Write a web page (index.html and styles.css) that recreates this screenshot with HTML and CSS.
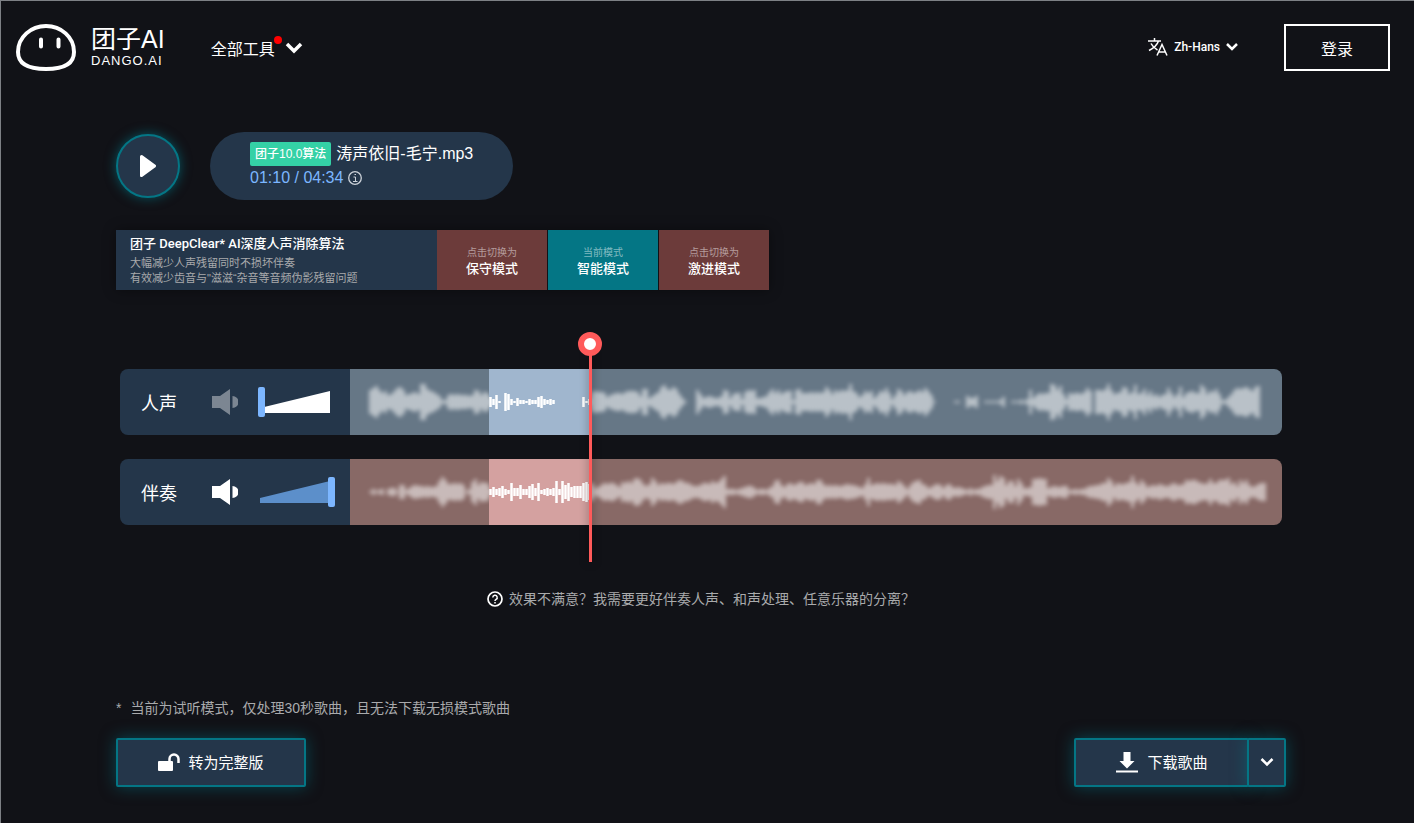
FILE: index.html
```html
<!DOCTYPE html>
<html lang="zh-Hans">
<head>
  <meta charset="UTF-8">
  <meta name="viewport" content="width=device-width, initial-scale=1.0">
  <title>团子AI</title>
  <link rel="stylesheet" href="styles.css">
</head>
<body>
  <header class="header">
    <a class="logo" href="#">
      <svg class="logo-face" viewBox="0 0 60 48" width="60" height="48">
        <path d="M30 2C15 2 2 13 2 28C2 40 13 45 30 45S58 40 58 28C58 13 45 2 30 2Z" fill="none" stroke="#fff" stroke-width="4"/>
        <path d="M25 15.500v7M42.500 15.500v7" stroke="#fff" stroke-width="4" stroke-linecap="round"/>
      </svg>
      <span class="logo-text">
        <span class="logo-name">团子AI</span>
        <span class="logo-sub">DANGO.AI</span>
      </span>
    </a>
    <button class="tools">
      <span class="tools-label">全部工具<i class="dot"></i></span>
      <svg viewBox="0 0 18 12" width="18" height="12"><path d="M2 2l7 7 7-7" fill="none" stroke="#fff" stroke-width="3.500"/></svg>
    </button>
    <button class="lang">
      <svg viewBox="0 0 20 18" width="20" height="18" fill="none" stroke="#fff" stroke-width="1.500">
        <path d="M0 3h13M6.500 0v3M10.500 3C9 7.500 5 10.500 1 12.500M3 5.500c1.500 3 4 5 6.500 6.500"/>
        <path d="M9 17.500L14 6.500l5 11M10.500 14h7"/>
      </svg>
      <span>Zh-Hans</span>
      <svg viewBox="0 0 12 8" width="12" height="8"><path d="M1 1l5 5 5-5" fill="none" stroke="#fff" stroke-width="2.500"/></svg>
    </button>
    <button class="login">登录</button>
  </header>

  <main class="main">
    <section class="player">
      <button class="play" aria-label="播放">
        <svg viewBox="0 0 16 22" width="16" height="22"><path d="M1.500 1.500L14.500 11 1.500 20.500Z" fill="#fff" stroke="#fff" stroke-width="3" stroke-linejoin="round"/></svg>
      </button>
      <div class="song">
        <div class="song-title"><span class="badge">团子10.0算法</span><span>涛声依旧-毛宁.mp3</span></div>
        <div class="song-time">
          <span>01:10 / 04:34</span>
          <svg viewBox="0 0 14 14" width="14" height="14" fill="none" stroke="#ccd2d9"><circle cx="7" cy="7" r="6.300" stroke-width="1.300"/><path d="M5.500 6h2v4.500M5 10.500h4.500M6.500 3.500h1.500" stroke-width="1"/></svg>
        </div>
      </div>
    </section>

    <section class="modes">
      <div class="modes-info">
        <h2>团子 DeepClear* AI深度人声消除算法</h2>
        <p>大幅减少人声残留同时不损坏伴奏</p>
        <p>有效减少齿音与"滋滋“杂音等音频伪影残留问题</p>
      </div>
      <button class="mode"><small>点击切换为</small><span>保守模式</span></button>
      <button class="mode active"><small>当前模式</small><span>智能模式</span></button>
      <button class="mode"><small>点击切换为</small><span>激进模式</span></button>
    </section>

    <section class="tracks">
      <div class="track vocal">
        <div class="track-panel">
          <label class="track-name" for="vol-vocal">人声</label>
          <button class="mute muted" aria-label="静音">
            <svg viewBox="0 0 26 26" width="26" height="26" fill="#fff"><path d="M0 7h8L18 0v26L8 19H0zM20.500 7a6 6 0 0 1 0 12z"/></svg>
          </button>
          <div class="volume">
            <svg viewBox="0 0 77 30" width="77" height="30"><path d="M2 21L72 4v22H2z"/></svg>
            <input id="vol-vocal" type="range" min="0" max="100" value="0">
          </div>
        </div>
        <svg class="wave" id="wave-vocal" viewBox="0 0 932 66" preserveAspectRatio="none"></svg>
      </div>
      <div class="track backing">
        <div class="track-panel">
          <label class="track-name" for="vol-backing">伴奏</label>
          <button class="mute" aria-label="静音">
            <svg viewBox="0 0 26 26" width="26" height="26" fill="#fff"><path d="M0 7h8L18 0v26L8 19H0zM20.500 7a6 6 0 0 1 0 12z"/></svg>
          </button>
          <div class="volume">
            <svg viewBox="0 0 77 30" width="77" height="30"><path d="M2 21L72 4v22H2z"/></svg>
            <input id="vol-backing" type="range" min="0" max="100" value="100">
          </div>
        </div>
        <svg class="wave" id="wave-backing" viewBox="0 0 932 66" preserveAspectRatio="none"></svg>
      </div>
      <div class="playhead"></div>
    </section>

    <a class="help" href="#">
      <svg viewBox="0 0 16 16" width="16" height="16" fill="none" stroke="#fff"><circle cx="8" cy="8" r="7" stroke-width="1.700"/><path d="M5.800 6.500a2.200 2.200 0 1 1 3.300 1.900C8.300 8.900 8 9.200 8 10M8 11v1.500" stroke-width="1.500"/></svg>
      <span>效果不满意？我需要更好伴奏人声、和声处理、任意乐器的分离？</span>
    </a>

    <p class="note"><span>*</span><span>当前为试听模式，仅处理30秒歌曲，且无法下载无损模式歌曲</span></p>

    <div class="actions">
      <button class="btn unlock">
        <svg viewBox="0 0 22 18" width="22" height="18"><rect x="0" y="8" width="15" height="10" rx="1" fill="#fff"/><path d="M11.500 9V6a4.500 4.500 0 0 1 9 0v4" fill="none" stroke="#fff" stroke-width="2.500"/></svg>
        <span>转为完整版</span>
      </button>
      <div class="download">
        <button class="btn download-main">
          <svg viewBox="0 0 24 22" width="24" height="22" fill="#fff"><path d="M8.500 1h7v9h4L12 17.500 4.500 10h4z"/><path d="M1 19.500h22v2H1z"/></svg>
          <span>下载歌曲</span>
        </button>
        <button class="btn download-more" aria-label="更多">
          <svg viewBox="0 0 14 10" width="14" height="10"><path d="M1.500 2L7 7.500 12.500 2" fill="none" stroke="#fff" stroke-width="2.500"/></svg>
        </button>
      </div>
    </div>
  </main>

  <script>
    // half height of every 3px bar
    const vocal = [
      12,14,16,12,9,11,7,8,11,14,15,12,7,8,9,10,8,18,18,13,11,10,8,6,2,2,7,8,7,8,7,7,7,6,7,12,11,7,10,9,
      5,3,7,1,0,9,8,3,1,4,2,2,1,3,2,2,5,6,3,2,3,2,0,0,0,0,0,0,0,0,0,5,1,3,
      10,11,10,10,9,5,7,8,9,9,8,10,11,11,11,10,6,13,13,4,6,8,10,15,17,13,12,15,13,8,4,1,0,0,0,12,8,4,5,6,5,4,4,6,12,11,4,8,9,9,3,10,12,11,12,4,4,5,6,10,13,9,12,8,10,11,11,2,12,13,9,9,9,10,9,10,9,10,15,12,8,12,10,
      12,11,12,18,11,9,5,7,11,9,11,4,7,11,10,14,9,3,7,13,11,7,10,11,9,10,12,10,14,11,7,1,0,0,0,0,0,0,1,1,0,0,6,4,4,6,0,0,1,1,1,1,1,2,5,0,0,1,1,1,2,1,3,12,4,7,9,8,9,9,18,17,12,16,8,3,9,8,9,9,8,10,14,11,0,12,12,11,13,18,12,8,9,10,15,14,8,10,17,8,9,13,7,11,6,8,5,7,8,14,9,5,8,15,5,9,10,11,9,9,17,14,8,11,10,13,8,2,2,5,8,12,14,13,14,15,13,11,15,16
    ];
    const backing = [
      1,3,1,2,3,0,3,4,4,1,7,7,2,4,6,7,6,6,5,6,5,5,6,11,15,12,8,8,9,8,9,7,1,3,10,13,7,10,9,9,
      3,5,3,4,6,3,2,9,4,4,7,3,3,6,8,4,9,2,3,4,3,4,11,3,11,7,9,5,6,6,6,9,10,8,
      9,4,5,7,9,8,9,9,7,5,10,9,11,9,13,14,12,8,6,8,14,11,7,9,8,9,9,8,10,12,11,9,9,7,6,6,7,9,9,8,11,9,10,13,16,3,3,3,2,3,4,5,6,6,4,2,3,3,2,4,6,11,12,7,5,8,9,7,8,10,10,7,8,9,8,12,12,8,6,7,6,7,6,
      6,7,8,7,7,6,5,4,8,14,7,8,9,8,9,8,8,8,7,11,9,6,3,7,10,11,12,8,7,4,5,7,8,7,4,7,8,5,4,5,4,3,2,4,2,3,3,5,6,7,7,17,11,16,14,7,11,11,6,13,9,4,4,5,13,13,14,13,13,4,5,6,5,5,6,6,2,2,3,2,3,3,5,6,6,7,7,9,9,14,11,6,9,8,8,9,10,16,10,7,12,9,5,6,7,6,8,7,6,6,8,9,7,7,8,12,11,12,12,10,9,8,9,13,9,9,12,12,12,14,8,10,6,12,9,12,7,5,6,8,9,9
    ];
    // bars inside the 30 second preview stay sharp
    const previewFrom = 40, previewTo = 74;

    function bars(data, from, to) {
      let d = "";
      for (let i = from; i < to; i++) {
        if (data[i]) d += `M${20.5 + i * 3} ${33 - data[i]}v${data[i] * 2}`;
      }
      return d;
    }

    function drawWave(id, data) {
      document.getElementById(id).innerHTML = `
        <path class="bars blurred" d="${bars(data, 0, data.length)}"/>
        <rect class="preview" x="139" y="0" width="102" height="66"/>
        <path class="bars" d="${bars(data, previewFrom, previewTo)}"/>`;
    }

    drawWave("wave-vocal", vocal);
    drawWave("wave-backing", backing);
  </script>
</body>
</html>
```
FILE: styles.css
```css
:root {
  --bg: #111217;
  --panel: #24364a;
  --teal: #047685;
  --blue: #7cb6ff;
  --red: #ff5a5a;
  --muted: #a9aaac;
}

*,
*::before {
  box-sizing: border-box;
}

body {
  margin: 0;
  padding-right: 13px;
  min-height: 100vh;
  background: var(--bg);
  color: #fff;
  border-top: 1px solid #7d8085;
  border-left: 1px solid #7d8085;
  font-family: "Liberation Sans", "Noto Sans CJK SC", sans-serif;
  font-size: 16px;
}

button {
  padding: 0;
  border: none;
  background: none;
  color: inherit;
  font: inherit;
  cursor: pointer;
}

a {
  color: inherit;
  text-decoration: none;
}

svg {
  display: block;
  flex: none;
}

h2, p {
  margin: 0;
}

/* header */
.header {
  display: flex;
  align-items: center;
  height: 93px;
  padding: 0 11px 0 15px;
}

.logo {
  display: flex;
  align-items: center;
  gap: 15px;
}

.logo-text {
  display: flex;
  flex-direction: column;
  padding-bottom: 2px;
}

.logo-name {
  font-size: 25px;
  line-height: 28px;
}

.logo-sub {
  font-size: 13px;
  line-height: 16px;
  letter-spacing: 1px;
}

.tools {
  display: flex;
  align-items: center;
  gap: 10px;
  margin-left: 46px;
}

.tools-label {
  position: relative;
}

.dot {
  position: absolute;
  top: 0;
  right: -7px;
  width: 8px;
  height: 8px;
  border-radius: 50%;
  background: #f00;
}

.lang {
  display: flex;
  align-items: center;
  gap: 6px;
  margin-left: auto;
  padding-bottom: 2px;
  font-family: Roboto, sans-serif;
  font-size: 12px;
  font-weight: 500;
}

.login {
  width: 106px;
  height: 47px;
  margin-left: 46px;
  border: 2px solid #fff;
}

/* content */
.main {
  display: flex;
  flex-direction: column;
  max-width: 1170px;
  margin: 0 auto;
  padding-top: 38px;
}

.player {
  display: flex;
  align-items: center;
  gap: 30px;
}

.play {
  display: flex;
  align-items: center;
  justify-content: center;
  width: 64px;
  height: 64px;
  border: 2px solid var(--teal);
  border-radius: 50%;
  background: var(--panel);
  box-shadow: 0 0 12px #047685aa;
}

.song {
  height: 68px;
  padding: 10px 40px;
  border-radius: 34px;
  background: var(--panel);
}

.song-title {
  display: flex;
  align-items: center;
  gap: 5px;
  line-height: 24px;
}

.badge {
  padding: 0 5px;
  border-radius: 2px;
  background: #34d1a6;
  font-size: 12px;
  font-weight: 500;
}

.song-time {
  display: flex;
  align-items: center;
  gap: 5px;
  color: var(--blue);
  line-height: 24px;
}

.modes {
  display: flex;
  align-self: flex-start;
  gap: 1px;
  margin-top: 30px;
  box-shadow: 0 0 12px rgba(0, 0, 0, 0.4);
}

.modes-info {
  width: 321px;
  height: 60px;
  margin-right: -1px;
  padding: 4px 14px;
  background: var(--panel);
  color: var(--muted);
  font-size: 11px;
  line-height: 15px;
}

.modes-info h2 {
  margin-bottom: 3px;
  color: #fff;
  font-family: Roboto, "Noto Sans CJK SC", sans-serif;
  font-size: 13px;
  font-weight: 500;
  line-height: 19px;
}

.mode {
  display: flex;
  flex-direction: column;
  align-items: center;
  justify-content: center;
  width: 110px;
  padding-top: 2px;
  background: #6c3b3a;
  font-size: 13px;
  font-weight: 500;
  line-height: 17px;
}

.mode small {
  color: rgba(255, 255, 255, 0.5);
  font-size: 10px;
  font-weight: 400;
  line-height: 14px;
}

.mode.active {
  background: var(--teal);
}

/* tracks */
.tracks {
  position: relative;
  display: flex;
  flex-direction: column;
  gap: 24px;
  margin: 79px 4px 0;
}

.track {
  display: flex;
  height: 66px;
  border-radius: 8px;
  overflow: hidden;
}

.track-panel {
  display: flex;
  align-items: center;
  flex: none;
  width: 230px;
  padding: 0 15px 0 21px;
  background: var(--panel);
}

.track-name {
  font-size: 18px;
}

.mute {
  margin-left: 35px;
}

.muted {
  opacity: 0.4;
}

.volume {
  display: grid;
  margin-left: auto;
}

.volume svg,
.volume input {
  grid-area: 1 / 1;
}

.volume svg {
  fill: #fff;
}

.backing .volume svg {
  fill: #5c8fca;
}

.volume input {
  width: 77px;
  height: 30px;
  margin: 0;
  background: none;
  appearance: none;
  -webkit-appearance: none;
}

.volume input::-webkit-slider-thumb {
  -webkit-appearance: none;
  width: 7px;
  height: 30px;
  border-radius: 2px;
  background: var(--blue);
}

.wave {
  flex: 1;
  min-width: 0;
  height: 66px;
}

.vocal .wave {
  background: #667786;
}

.backing .wave {
  background: #886966;
}

.vocal .preview {
  fill: #a0b6ce;
}

.backing .preview {
  fill: #d4a1a0;
}

.bars {
  fill: none;
  stroke: #fff;
  stroke-width: 2.5;
}

.blurred {
  opacity: 0.65;
  filter: blur(2px);
}

.playhead {
  position: absolute;
  top: -14px;
  bottom: -37px;
  left: calc(230px + (100% - 230px) * 0.2565);
  width: 3px;
  background: var(--red);
  box-shadow: 0 0 8px rgba(0, 0, 0, 0.5);
}

.playhead::before {
  content: "";
  position: absolute;
  top: -23px;
  left: -11px;
  width: 24px;
  height: 24px;
  border: 6px solid var(--red);
  border-radius: 50%;
  background: #fff;
}

.help {
  display: flex;
  align-items: center;
  align-self: center;
  gap: 6px;
  margin-top: 64px;
  color: var(--muted);
  font-size: 14px;
  line-height: 20px;
}

.note {
  display: flex;
  gap: 9px;
  margin-top: 89px;
  color: var(--muted);
  font-size: 14px;
  line-height: 20px;
}

.actions {
  display: flex;
  justify-content: space-between;
  margin-top: 20px;
}

.btn {
  display: flex;
  align-items: center;
  justify-content: center;
  gap: 8px;
  height: 49px;
  padding-bottom: 2px;
  border: 2px solid var(--teal);
  border-radius: 2px;
  background: var(--panel);
  box-shadow: 0 0 16px #04768588;
  font-size: 15px;
}

.unlock {
  width: 190px;
}

.download {
  display: flex;
}

.download-main {
  width: 175px;
}

.download-more {
  width: 39px;
  margin-left: -2px;
}
```
